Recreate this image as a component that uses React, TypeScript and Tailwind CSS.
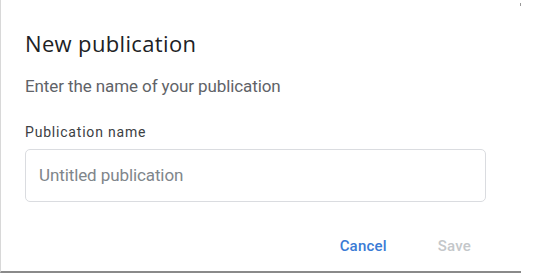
export default function App() {
  return (
    <div className="w-[537px] h-[275px] bg-white overflow-hidden" style={{ fontFamily: "Roboto, 'Liberation Sans', sans-serif" }}>
      <div className="w-[521px] h-[273px] bg-white border-l border-l-[#d8d8d8] border-b-2 border-b-[#8a8a8a] relative">
        <div className="absolute right-0 top-[3px] w-px h-[3px] bg-[#999]" />
        <div className="pl-[24px] pt-[29px]">
          <h1 className="text-[22px] leading-[28px] text-[#202124] tracking-[0.35px]" style={{ fontFamily: "'Open Sans', Roboto, sans-serif" }}>New publication</h1>
          <p className="mt-[19px] text-[17px] leading-[20px] text-[#5f6368] tracking-[-0.1px]">Enter the name of your publication</p>
          <div className="mt-[27px] text-[14px] leading-[18px] text-[#3c4043] tracking-[0.8px]">Publication name</div>
          <div className="mt-[8px] w-[461px] h-[53px] border border-[#dadce0] rounded-[5px] flex items-center pl-[13px]">
            <span className="text-[17px] text-[#80868b] tracking-[-0.1px]">Untitled publication</span>
          </div>
          <div className="mt-[34px] flex justify-end pr-[50px] gap-[51px] text-[15px] leading-[20px] font-medium tracking-[0.2px]">
            <span className="text-[#3a7bd5]">Cancel</span>
            <span className="text-[#c4c7ca]">Save</span>
          </div>
        </div>
      </div>
    </div>
  );
}
